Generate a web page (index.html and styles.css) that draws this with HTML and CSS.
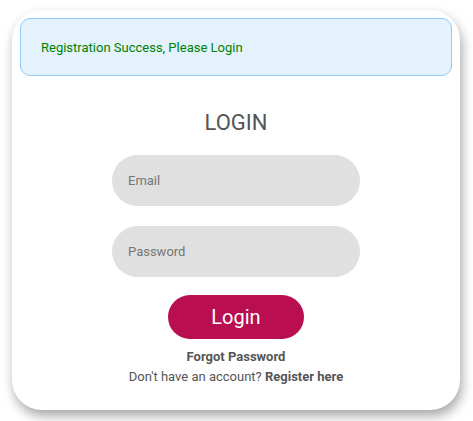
FILE: index.html
```html
<!DOCTYPE html>
<html>
<head>
<meta charset="utf-8">
<link rel="stylesheet" href="styles.css">
</head>
<body>
<div class="card">
  <div class="alert">Registration Success, Please Login</div>
  <h2 class="title">LOGIN</h2>
  <form class="form">
    <input class="field" type="text" placeholder="Email">
    <input class="field" type="password" placeholder="Password">
    <button class="btn" type="button">Login</button>
  </form>
  <div class="links">
    <div class="forgot">Forgot Password</div>
    <div class="register">Don't have an account? <b>Register here</b></div>
  </div>
</div>
</body>
</html>
```
FILE: styles.css
```css
* { box-sizing: border-box; }
html, body { margin: 0; background: #fff; }
body {
  padding: 10px 13px 11px 12px;
  font-family: Roboto, "Liberation Sans", sans-serif;
}
.card {
  width: 448px;
  height: 400px;
  background: #fff;
  border-radius: 30px;
  box-shadow: 2px 6px 12px rgba(0,0,0,0.35);
  padding: 8px;
  display: flex;
  flex-direction: column;
  align-items: center;
}
.alert {
  width: 100%;
  height: 58px;
  background: #e3f2fd;
  border: 1px solid #90caf9;
  border-radius: 10px;
  color: #008000;
  font-size: 13px;
  padding: 0 20px;
  display: flex;
  align-items: center;
}
.title {
  margin: 34px 0 0;
  font-size: 22px;
  font-weight: 400;
  color: #555;
  line-height: 26px;
}
.form {
  margin-top: 19px;
  display: flex;
  flex-direction: column;
  align-items: center;
  gap: 20px;
}
.field {
  width: 248px;
  height: 51px;
  border: none;
  border-radius: 26px;
  background: #e0e0e0;
  padding: 0 16px;
  font-family: inherit;
  font-size: 13px;
  color: #333;
  outline: none;
}
.field::placeholder { color: #757575; }
.btn {
  margin-top: -2px;
  width: 136px;
  height: 44px;
  border: none;
  border-radius: 22px;
  background: #b90e50;
  color: #fff;
  font-family: inherit;
  font-size: 20px;
}
.links {
  margin-top: 8px;
  text-align: center;
  font-size: 13px;
  color: #555;
  line-height: 20px;
}
.forgot { font-weight: 700; }
.register b { font-weight: 700; }
```
